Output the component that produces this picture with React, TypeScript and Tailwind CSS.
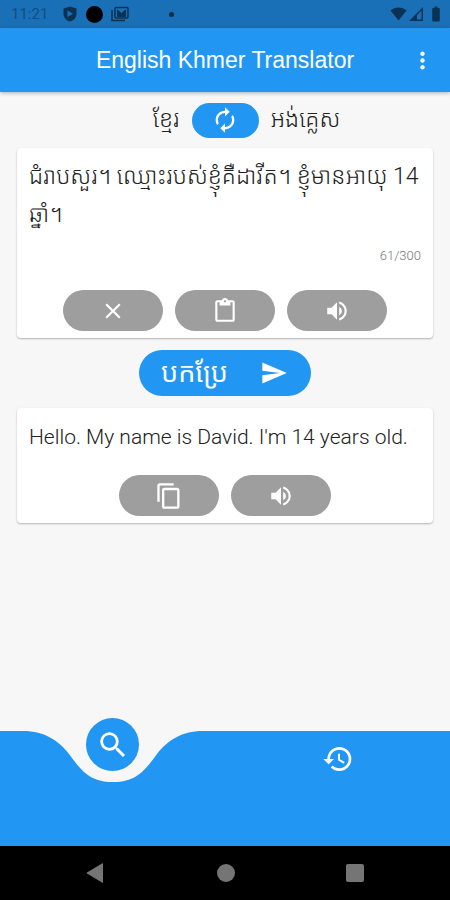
import { useState, type ReactNode } from "react";
import {
  MdAutorenew,
  MdBatteryFull,
  MdClose,
  MdContentCopy,
  MdContentPaste,
  MdHistory,
  MdMoreVert,
  MdSearch,
  MdSend,
  MdVolumeUp,
} from "react-icons/md";

const MAX_LENGTH = 300;

export default function App() {
  return (
    <div className="flex min-h-screen flex-col bg-[#f7f7f7] font-['Roboto','Noto_Sans_Khmer',sans-serif] text-[#212121]">
      <StatusBar />
      <AppBar />
      <main className="flex flex-1 flex-col items-center px-[17px] pt-2.5">
        <LanguageSwitch />
        <SourceCard />
        <button
          type="button"
          className="mt-3 flex h-[46px] items-center gap-8 rounded-full bg-[#2196f3] pr-[23px] pl-[22px] text-[27px] leading-none text-white"
        >
          បកប្រែ
          <MdSend className="size-7" />
        </button>
        <ResultCard />
      </main>
      <BottomNav />
      <SystemNav />
    </div>
  );
}

function StatusBar() {
  return (
    <div className="flex h-7 items-center bg-[#1a70b7] pr-[5px] pl-[11px] text-[#0b3252]">
      <span className="text-[15px] leading-7 text-[#104d80]">11:21</span>
      <svg viewBox="0 0 16 16" className="ml-3.5 size-4" fill="currentColor">
        <path
          fillRule="evenodd"
          d="M8 0.500L14.500 2.500V7.500C14.500 11.500 12 14.500 8 15.500C4 14.500 1.500 11.500 1.500 7.500V2.500ZM5.500 4.500V11L11 7.800Z"
        />
      </svg>
      <span className="ml-2 size-[17px] rounded-full bg-black" />
      <svg viewBox="0 0 18 16" className="ml-2 h-4 w-[18px]" fill="none" stroke="currentColor">
        <path d="M1 4V14.500H14" strokeWidth="1.500" />
        <rect x="4" y="1.500" width="13" height="10.500" rx="1" strokeWidth="1.500" />
        <path d="M6.500 10.500V4L10.500 7.500L14.500 4V10.500Z" fill="currentColor" />
      </svg>
      <span className="ml-10 size-[5px] rounded-full bg-[#0b2c48]" />
      <svg viewBox="0 0 17 14" className="ml-auto h-3.5 w-[17px]" fill="currentColor">
        <path d="M0.500 3.500C5 -0.500 12 -0.500 16.500 3.500L8.500 13.500Z" />
      </svg>
      <svg viewBox="0 0 14 14" className="ml-0.5 size-3.5" fill="currentColor">
        <path fillRule="evenodd" d="M14 0V14H0ZM12.500 3.500L8 8V12.500H12.500Z" />
      </svg>
      <MdBatteryFull className="ml-1 size-[18px]" />
    </div>
  );
}

function AppBar() {
  return (
    <header className="z-10 grid h-16 grid-cols-[1fr_auto_1fr] items-center bg-[#2196f3] text-white shadow-[0_1px_4px_rgba(0,0,0,0.3)]">
      <h1 className="col-start-2 font-['Liberation_Sans',Arial,sans-serif] text-[23px]">
        English Khmer Translator
      </h1>
      <button type="button" aria-label="More options" className="mr-3.5 justify-self-end">
        <MdMoreVert className="size-[27px]" />
      </button>
    </header>
  );
}

function LanguageSwitch() {
  return (
    <div className="grid w-full grid-cols-[1fr_auto_1fr] items-center gap-3 text-[23px] leading-9 font-light">
      <span className="text-right">ខ្មែរ</span>
      <button
        type="button"
        aria-label="Swap languages"
        className="grid h-[35px] w-[67px] place-items-center rounded-full bg-[#2196f3] text-white"
      >
        <MdAutorenew className="size-7" />
      </button>
      <span>អង់គ្លេស</span>
    </div>
  );
}

function Card({ children }: { children: ReactNode }) {
  return (
    <section className="w-full rounded bg-white shadow-[0_1px_2px_rgba(0,0,0,0.28)]">
      {children}
    </section>
  );
}

function SourceCard() {
  const [text, setText] = useState(
    "ជំរាបសួរ។ ឈ្មោះរបស់ខ្ញុំគឺដាវីត។ ខ្ញុំមានអាយុ 14 ឆ្នាំ។",
  );

  return (
    <div className="mt-2.5 w-full">
      <Card>
        <textarea
          aria-label="Text to translate"
          maxLength={MAX_LENGTH}
          value={text}
          onChange={(e) => setText(e.target.value)}
          className="block h-24 w-full resize-none overflow-hidden px-3 pt-2.5 text-[23px] leading-[38px] font-light focus:outline-none"
        />
        <p className="pr-3 text-right text-[13px] leading-6 font-light text-[#757575]">
          61/{MAX_LENGTH}
        </p>
        <div className="flex justify-center gap-3 pt-[22px] pb-[7px]">
          <PillButton label="Clear" onClick={() => setText("")}>
            <MdClose className="size-[26px]" />
          </PillButton>
          <PillButton label="Paste">
            <MdContentPaste className="size-[26px]" />
          </PillButton>
          <PillButton label="Listen to source text">
            <MdVolumeUp className="size-[26px]" />
          </PillButton>
        </div>
      </Card>
    </div>
  );
}

function ResultCard() {
  return (
    <div className="mt-3 w-full">
      <Card>
        <p className="px-3 pt-3.5 text-[21px] leading-[30px] font-light">
          Hello. My name is David. I'm 14 years old.
        </p>
        <div className="flex justify-center gap-3 pt-[23px] pb-[7px]">
          <PillButton label="Copy">
            <MdContentCopy className="size-7" />
          </PillButton>
          <PillButton label="Listen to translation">
            <MdVolumeUp className="size-[26px]" />
          </PillButton>
        </div>
      </Card>
    </div>
  );
}

type PillButtonProps = {
  label: string;
  onClick?: () => void;
  children: ReactNode;
};

function PillButton({ label, onClick, children }: PillButtonProps) {
  return (
    <button
      type="button"
      aria-label={label}
      onClick={onClick}
      className="grid h-[41px] w-[100px] place-items-center rounded-full bg-[#9e9e9e] text-white"
    >
      {children}
    </button>
  );
}

function BottomNav() {
  return (
    <nav className="grid h-[115px] grid-cols-2 items-start bg-[#2196f3] text-white">
      <div className="relative flex justify-center">
        {/* notch around the active tab */}
        <svg
          viewBox="0 0 180 52"
          className="absolute top-0 h-[52px] w-[180px] fill-[#f7f7f7]"
        >
          <path d="M0 0C22 0 36 10 46 23C58 39 66 51 90 51C114 51 122 39 134 23C144 10 158 0 180 0Z" />
        </svg>
        <button
          type="button"
          aria-label="Translate"
          className="relative -mt-[13px] grid size-[53px] place-items-center rounded-full bg-[#2196f3]"
        >
          <MdSearch className="size-[34px]" />
        </button>
      </div>
      <button type="button" aria-label="History" className="mt-3 justify-self-center">
        <MdHistory className="size-8" />
      </button>
    </nav>
  );
}

function SystemNav() {
  return (
    <div className="flex h-[54px] items-center justify-around bg-black px-[30px] text-[#757575]">
      <button type="button" aria-label="Back">
        <svg viewBox="0 0 20 20" className="size-5" fill="currentColor">
          <path d="M17 0.500V19.500Q17 20 16 19.500L1 10.600Q0 10 1 9.400L16 0.500Q17 0 17 0.500Z" />
        </svg>
      </button>
      <button type="button" aria-label="Home">
        <span className="block size-[18px] rounded-full bg-current" />
      </button>
      <button type="button" aria-label="Recent apps">
        <span className="block size-[18px] rounded-xs bg-current" />
      </button>
    </div>
  );
}
